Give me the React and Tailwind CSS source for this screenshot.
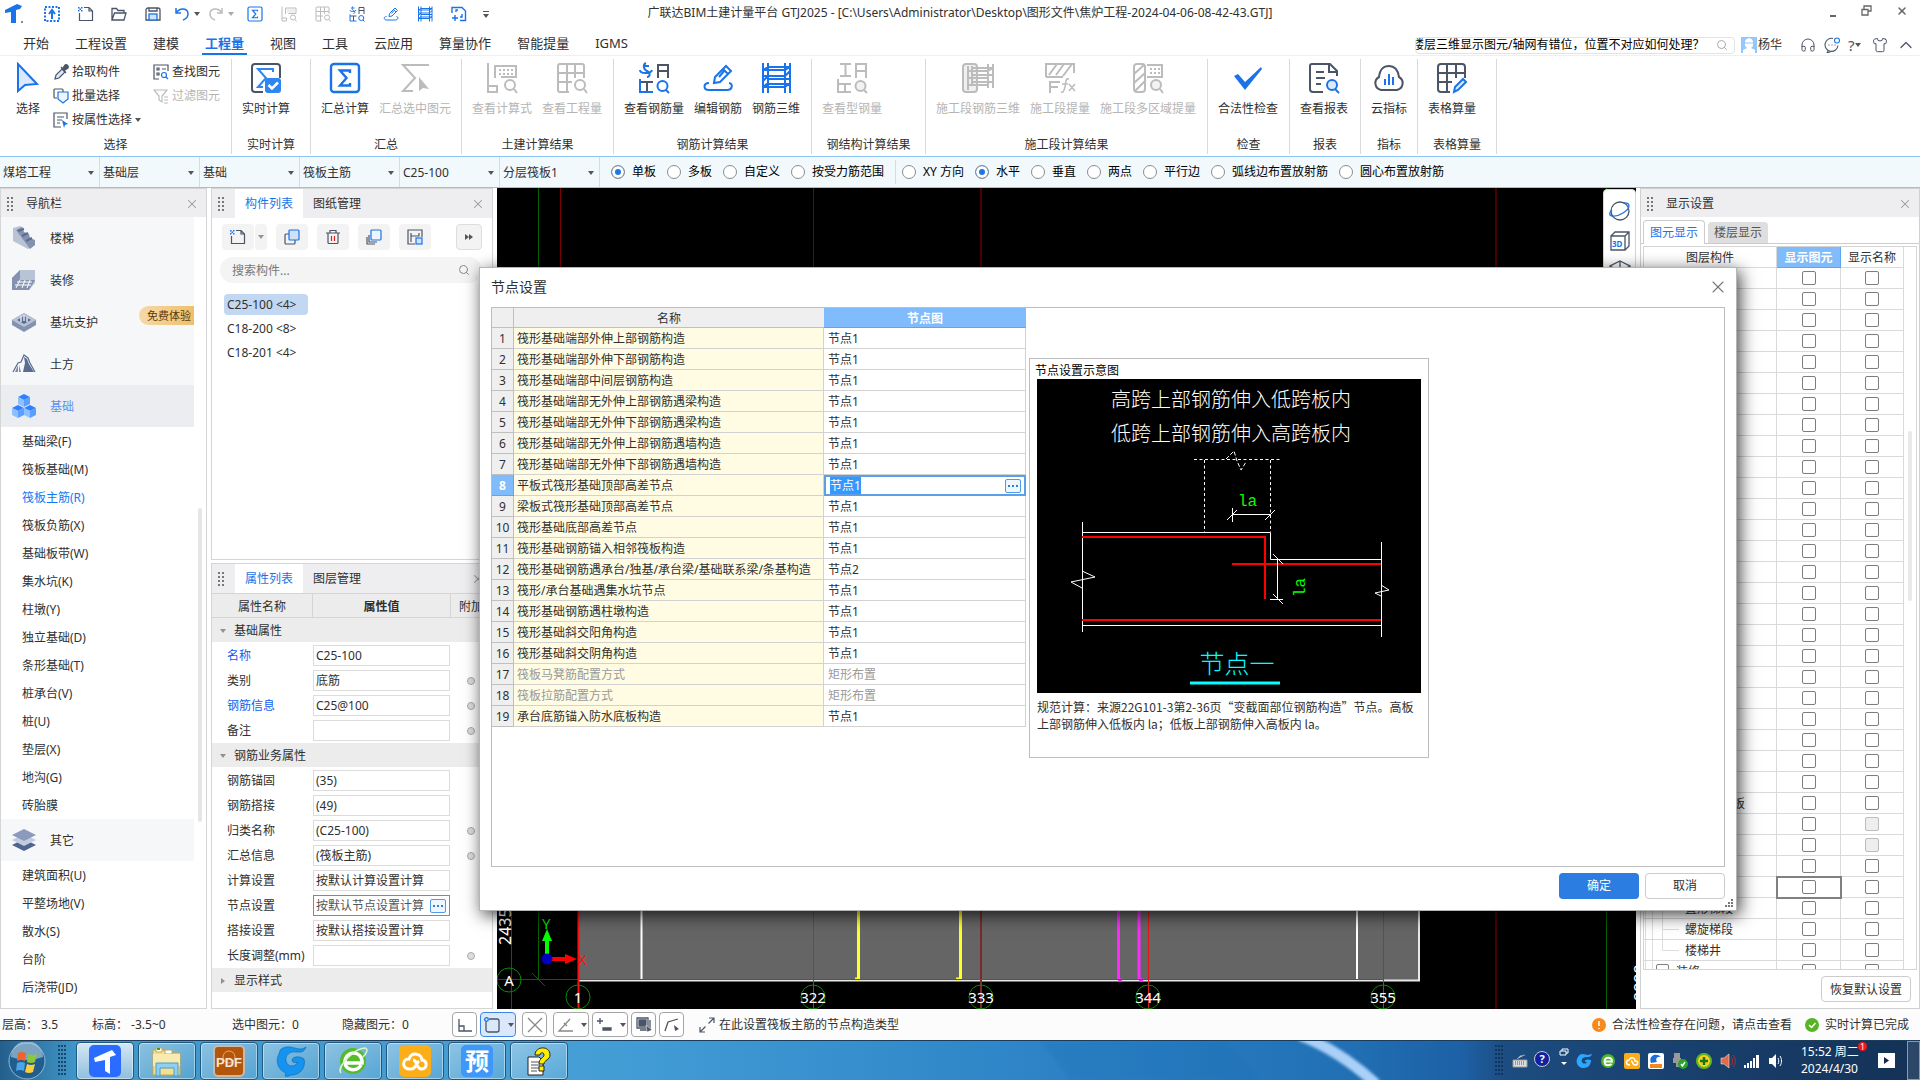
import { useEffect, useRef } from 'react';
import { X, Search, Headphones, Shirt, ChevronUp } from 'lucide-react';

const BLUE = '#1a73e8';
const DARK = '#4b5567';
const GRAY = '#bcbcbc';

const Svg = ({ size = 'size-8', box = 32, children, stroke = DARK, width = 2 }) => (
  <svg viewBox={`0 0 ${box} ${box}`} className={`${size} shrink-0`} fill="none" stroke={stroke} strokeWidth={width} aria-hidden="true">
    {children}
  </svg>
);

const Caret = ({ className = '' }) => (
  <svg viewBox="0 0 6 4" className={`w-[6px] h-[4px] shrink-0 fill-[#555] ${className}`} aria-hidden="true">
    <path d="M0 0h6L3 4z" />
  </svg>
);

/* ---------- ribbon icons ---------- */

const SumIcon = ({ size }) => (
  <Svg size={size} stroke={BLUE} width={2.4}>
    <rect x="2" y="2" width="28" height="28" rx="3" />
    <path d="M21 11V8.500H11l6.500 7.500L11 23.500h10V21" />
  </Svg>
);

const RealtimeIcon = ({ size }) => (
  <Svg size={size}>
    <path d="M13 30H5a3 3 0 0 1-3-3V5a3 3 0 0 1 3-3h22a3 3 0 0 1 3 3v11" />
    <path d="M23 10V7H8l8 9-8 9h5" stroke="#2f86f0" />
    <rect x="15" y="16" width="16" height="15" rx="3" fill="#2f86f0" stroke="none" />
    <path d="m18.500 23 3.500 3.500 6-6" stroke="#fff" strokeWidth="2.500" />
  </Svg>
);

const SumPickIcon = ({ size }) => (
  <Svg size={size} stroke={GRAY}>
    <path d="M30 3H4l12 13L4 29h10" />
    <path d="M20 15v14l4-3 6 1z" fill={GRAY} stroke="none" />
  </Svg>
);

const FormulaIcon = ({ size }) => (
  <Svg size={size} stroke={GRAY}>
    <path d="M2 1v29h9v-6H2M9 16V4h21v11H15" />
    <path d="M13 8h2m2 0h2m2 0h2m2 0h2M13 12h2m2 0h2m2 0h2m2 0h2" />
    <circle cx="24" cy="23" r="5" /><path d="m28 27 3 4" />
  </Svg>
);

const GridSearchIcon = ({ size }) => (
  <Svg size={size} stroke={GRAY}>
    <path d="M13 30H4a2 2 0 0 1-2-2V4a2 2 0 0 1 2-2h22a2 2 0 0 1 2 2v12M2 11h26M2 20h14M11 2v28M19 2v14" />
    <circle cx="24" cy="23" r="5" /><path d="m28 27 3 4" />
  </Svg>
);

const RebarQtyIcon = ({ size }) => (
  <Svg size={size}>
    <path d="M8 1c-3 1-3 6 1 8s3 6 0 6M2 8c0 4 11 4 12 0M5 4h6" stroke={BLUE} />
    <path d="M20 16V3h10v13M20 9h10M2 20h13M9 20v10" />
    <path d="M2 17v13h13" stroke={BLUE} />
    <circle cx="24.500" cy="24" r="5" stroke={BLUE} /><path d="m28 28 3 3" stroke={BLUE} />
  </Svg>
);

const SteelQtyIcon = ({ size }) => (
  <Svg size={size} stroke={GRAY}>
    <path d="M4 2h11M4 14h11M9.500 2v12M20 16V2h10v14M20 9h10M2 17v13h13M2 22h13M9 22v8" />
    <circle cx="24.500" cy="24" r="5" fill="#f2f2f2" /><path d="m28 28 3 3" />
  </Svg>
);

const EditRebarIcon = ({ size }) => (
  <Svg size={size} stroke={BLUE}>
    <path d="m12 21 1-6L24 4l5 5-11 11zM21 7l5 5M17 15l5-6" />
    <path d="M7 21c-6 0-6 7 0 7h18c6 0 6-7 2-7" />
  </Svg>
);

const Rebar3dIcon = ({ size, stroke = BLUE }) => (
  <Svg size={size} stroke={stroke}>
    <path d="M3 1v30M8 1v30M25 1v30M30 1v30M3 8h22l5-3M8 5h22M3 14h22M8 17h22M3 25h22M8 22h22M3 8l5-3M3 19l5-5M25 14l5-5M3 25l5-4M25 25l5-4" />
  </Svg>
);

const SectionRebarIcon = () => (
  <Svg stroke={GRAY}>
    <rect x="1" y="2" width="14" height="28" rx="3" fill="#f0f0f0" />
    <path d="M6 4v24M10 4v20M26 2v24M31 2v24M6 9h20l5-3M10 6h21M6 16h20M10 13h21M6 23h20M10 20h21" />
  </Svg>
);

const SectionFxIcon = () => (
  <Svg stroke={GRAY}>
    <path d="M2 15V2h28v9M2 15h17M5 13 13 2M12 13l8-11M19 14l9-12M6 19v12M6 20h10M6 25h8" />
    <path d="M25 17c-4-1-3 4-4 8s-2 6-4 5M18 22h6M25 22l6 7M31 22l-6 7" strokeWidth="1.500" />
  </Svg>
);

const SectionZoneIcon = () => (
  <Svg stroke={GRAY}>
    <rect x="2" y="2" width="11" height="28" rx="3" />
    <path d="m2 12 10-9M2 21l11-10M3 29l10-10M15 3h15v12H15" />
    <path d="M18 7h2m2 0h2m2 0h2M18 11h2m2 0h2m2 0h2" />
    <circle cx="24" cy="23" r="5" fill="#f2f2f2" /><path d="m28 27 3 4" />
  </Svg>
);

const CheckIcon = () => (
  <Svg>
    <path d="m2 14 4-2 7 8L29 5l1 2-17 21z" fill={BLUE} stroke="none" />
  </Svg>
);

const ReportIcon = () => (
  <Svg>
    <path d="M15 30H5a3 3 0 0 1-3-3V4a2 2 0 0 1 2-2h18l7 7v5M21 2v8h8M8 10h8M8 16h9M8 22h5" />
    <circle cx="24" cy="23" r="5" fill="#dbeafe" stroke={BLUE} /><path d="m27 27 4 4" stroke={BLUE} />
  </Svg>
);

const CloudIcon = () => (
  <Svg>
    <path d="M8 28a7 7 0 0 1-2-13C7 7 10 4 16 4s9 4 10 11a7 7 0 0 1-2 13z" />
    <path d="M12 17v6M16 12v11M20 15v8" stroke={BLUE} />
  </Svg>
);

const TableCalcIcon = () => (
  <Svg>
    <path d="M14 30H5a3 3 0 0 1-3-3V5a3 3 0 0 1 3-3h21a3 3 0 0 1 3 3v11M2 11h27M2 20h14M11 2v28M20 2v14" />
    <path d="m18 30 1-5 8-8 3 3-8 8z" stroke={BLUE} fill="#dbeafe" />
  </Svg>
);

const NewDocIcon = ({ size = 'size-4' }) => (
  <Svg size={size} box={16} width={1.2}>
    <path d="M6 1.500h5l3.500 3.500v9.500h-13V7M11 1.500V5h3.500" />
    <path d="M0 1h1.500v1.500H0zM3 1h1.500v1.500H3zM1.500 2.500H3V4H1.500zM0 4h1.500v1.500H0zM3 4h1.500v1.500H3z" fill={BLUE} stroke="none" />
  </Svg>
);

/* ---------- top bars ---------- */

const QuickButton = ({ label, className, children }) => (
  <button type="button" aria-label={label} className={`flex items-center justify-center h-6 ${className}`}>
    {children}
  </button>
);

const TitleBar = () => (
  <header className="relative h-7 shrink-0 flex items-center">
    <div className="flex items-center">
      <QuickButton label="主菜单" className="w-[35px] pr-2">
        <svg viewBox="0 0 20 20" className="size-5" aria-hidden="true">
          <path d="M1 6 13 0l5 2-2 3-4 1v13H7V8L1 9z" fill={BLUE} />
          <path d="M17 17h2v2h-2z" fill="#888" />
        </svg>
      </QuickButton>
      <QuickButton label="上传" className="w-[34px]">
        <Svg size="size-4" box={16} stroke={BLUE}>
          <rect x="1" y="1" width="14" height="14" strokeDasharray="2 1.500" />
          <path d="M8 13V6M5 8l3-4 3 4" />
        </Svg>
      </QuickButton>
      <QuickButton label="新建" className="w-[33px]"><NewDocIcon /></QuickButton>
      <QuickButton label="打开" className="w-[34px]">
        <Svg size="size-4" box={16} width={1.3}>
          <path d="M1 14V2.500h4.500l1.500 2h6V7M1 14l2.500-7H15l-2 7z" />
        </Svg>
      </QuickButton>
      <QuickButton label="保存" className="w-[34px]">
        <Svg size="size-4" box={16} width={1.3}>
          <path d="M1 4a2 2 0 0 1 2-2h10a2 2 0 0 1 2 2v10H1zM4 2v3h8V2" />
          <rect x="4" y="8" width="8" height="6" fill="#cfe3fb" stroke={BLUE} />
        </Svg>
      </QuickButton>
      <QuickButton label="撤销" className="w-[34px] gap-1">
        <Svg size="size-4" box={16} stroke={BLUE} width={1.5}><path d="M2 2v5h5M2 7c4-6 12-5 12 1 0 3-2 5-5 6" /></Svg>
        <Caret />
      </QuickButton>
      <QuickButton label="恢复" className="w-[34px] gap-1">
        <Svg size="size-4" box={16} stroke={GRAY} width={1.5}><path d="M14 2v5H9M14 7C10 1 2 2 2 8c0 3 2 5 5 6" /></Svg>
        <Caret className="opacity-50" />
      </QuickButton>
      <QuickButton label="汇总计算" className="w-[34px]"><SumIcon size="size-4" /></QuickButton>
      <QuickButton label="查看计算式" className="w-[34px]"><FormulaIcon size="size-4" /></QuickButton>
      <QuickButton label="查看工程量" className="w-[34px]"><GridSearchIcon size="size-4" /></QuickButton>
      <QuickButton label="查看钢筋量" className="w-[34px]"><RebarQtyIcon size="size-4" /></QuickButton>
      <QuickButton label="编辑钢筋" className="w-[34px]"><EditRebarIcon size="size-4" /></QuickButton>
      <QuickButton label="钢筋三维" className="w-[34px]"><Rebar3dIcon size="size-4" /></QuickButton>
      <QuickButton label="新增" className="w-[34px]">
        <Svg size="size-4" box={16} stroke={BLUE} width={1.4}>
          <path d="M1 7V1.500h10l3.500 3.500v9.500H9M4 9v6M1 12h6M5 6V4h2M11 8v3H9" />
        </Svg>
      </QuickButton>
      <QuickButton label="更多" className="w-5 flex-col gap-[2px]">
        <span className="w-[6px] h-px bg-[#555]" />
        <Caret />
      </QuickButton>
    </div>
    <h1 className="absolute inset-x-0 top-[5px] text-center leading-4 pointer-events-none">
      广联达BIM土建计量平台 GTJ2025 - [C:\Users\Administrator\Desktop\图形文件\焦炉工程-2024-04-06-08-42-43.GTJ]
    </h1>
    <div className="ml-auto self-start flex items-center gap-6 pr-3 h-[21px]">
      <button type="button" aria-label="最小化" className="w-3 h-3 flex items-end justify-end"><span className="w-[6px] h-[2px] bg-[#666]" /></button>
      <button type="button" aria-label="还原">
        <Svg size="size-3" box={12} stroke="#666" width={1.3}><path d="M4 4V1h7v5H8M2 4.500h6V10H2z" /></Svg>
      </button>
      <button type="button" aria-label="关闭"><X className="size-3 text-[#666]" strokeWidth={3} /></button>
    </div>
  </header>
);

const menus = ['开始', '工程设置', '建模', '工程量', '视图', '工具', '云应用', '算量协作', '智能提量', 'IGMS'];

const MenuBar = () => {
  const searchRef = useRef(null);

  // the hint is longer than the box, keep its end in view
  useEffect(() => {
    searchRef.current.scrollLeft = searchRef.current.scrollWidth;
  }, []);

  return (
    <nav className="h-7 shrink-0 flex items-end border-b border-[#efefef] pl-5">
      <div className="flex gap-5 text-[13px]">
        {menus.map((m) => (
          <button
            key={m}
            type="button"
            className={`h-6 px-[3px] pt-px leading-5 border-b-2 ${m === '工程量' ? 'text-[#1a73e8] border-[#1a73e8] font-bold' : 'border-transparent'}`}
          >
            {m}
          </button>
        ))}
      </div>
      <div className="ml-auto flex items-center h-5 pr-1">
        <div className="flex items-center w-[320px] h-[17px] border border-[#e3e3e3] rounded-sm">
          <input
            ref={searchRef}
            aria-label="搜索"
            defaultValue="楼层三维显示图元/轴网有错位，位置不对应如何处理？"
            className="w-[288px] h-4 text-black outline-none"
          />
          <Search className="size-3 ml-3 text-[#aaa]" />
        </div>
        <button type="button" className="flex items-center ml-[6px] gap-px">
          <svg viewBox="0 0 16 16" className="size-4 bg-[#94c7fb]" aria-hidden="true">
            <path d="M4 5c0-5 8-5 8 0v4l-2 2 4 2v3H2v-3l4-2-2-2z" fill="#fff" />
            <path d="M4 6h8" stroke="#94c7fb" />
          </svg>
          杨华
        </button>
        <div className="flex items-center gap-2 ml-[18px] text-[#4b5567]">
          <button type="button" aria-label="客服"><Headphones className="size-4" strokeWidth={1.5} /></button>
          <button type="button" aria-label="消息">
            <Svg size="size-4" box={16} width={1.1}>
              <path d="M9 1.500a6.500 6.500 0 1 0 5 7M4 14l-1 2 4-1.500M4.500 8h1M7.500 8h1M10.500 8h1" />
              <circle cx="13" cy="3.500" r="2.500" stroke={BLUE} />
            </Svg>
          </button>
          <button type="button" aria-label="帮助" className="flex items-center text-[15px] leading-4 w-4">?<Caret /></button>
          <button type="button" aria-label="皮肤"><Shirt className="size-4" strokeWidth={1.5} /></button>
          <button type="button" aria-label="收起"><ChevronUp className="size-5" strokeWidth={1.5} /></button>
        </div>
      </div>
    </nav>
  );
};

const groups = [
  { label: '实时计算', width: 'w-[79px]', items: [['实时计算', RealtimeIcon]] },
  { label: '汇总', width: 'w-[151px]', items: [['汇总计算', SumIcon], ['汇总选中图元', SumPickIcon, true]] },
  { label: '土建计算结果', width: 'w-[152px]', items: [['查看计算式', FormulaIcon, true], ['查看工程量', GridSearchIcon, true]] },
  { label: '钢筋计算结果', width: 'w-[198px]', items: [['查看钢筋量', RebarQtyIcon], ['编辑钢筋', EditRebarIcon], ['钢筋三维', Rebar3dIcon]] },
  { label: '钢结构计算结果', width: 'w-[114px]', items: [['查看型钢量', SteelQtyIcon, true]] },
  { label: '施工段计算结果', width: 'w-[282px]', items: [['施工段钢筋三维', SectionRebarIcon, true], ['施工段提量', SectionFxIcon, true], ['施工段多区域提量', SectionZoneIcon, true]] },
  { label: '检查', width: 'w-[82px]', items: [['合法性检查', CheckIcon]] },
  { label: '报表', width: 'w-[71px]', items: [['查看报表', ReportIcon]] },
  { label: '指标', width: 'w-[57px]', items: [['云指标', CloudIcon]] },
  { label: '表格算量', width: 'w-[79px]', items: [['表格算量', TableCalcIcon]] },
];

const BigButton = ({ label, icon: Icon, disabled }) => (
  <button type="button" disabled={disabled} className={`flex flex-col items-center gap-[6px] whitespace-nowrap leading-[18px] ${disabled ? 'text-[#b5b5b5]' : ''}`}>
    <Icon />
    {label}
  </button>
);

const PointerIcon = () => (
  <Svg><path d="M6 2v27l7-6 12-1z" fill="#dbe9fb" stroke={BLUE} /></Svg>
);

const Ribbon = () => (
  <section className="h-[100px] shrink-0 flex pt-[3px] pb-[2px]">
    <div className="w-[232px] shrink-0 border-r border-[#d9d9d9] flex flex-col justify-between">
      <div className="flex pl-3 pt-[3px]">
        <BigButton label="选择" icon={PointerIcon} />
        <div className="ml-[9px] pt-px flex flex-col gap-[6px] leading-[18px]">
          <button type="button" className="flex items-center gap-[3px]">
            <Svg size="size-4" box={16} width={1.2}>
              <path d="m2 15 1-4 6-6 3 3-6 6z" fill="#dbe9fb" />
              <path d="m8 3 5 6M10 4l2-3c2-1 4 1 3 3l-3 2z" fill={DARK} />
            </Svg>
            拾取构件
          </button>
          <button type="button" className="flex items-center gap-[3px]">
            <Svg size="size-4" box={16} width={1.2}>
              <path d="M4 10H2a1 1 0 0 1-1-1V2a1 1 0 0 1 1-1h7a1 1 0 0 1 1 1v2" />
              <path d="M5 4h10v7l-5 4-5-4z" stroke={BLUE} fill="#eef5ff" />
            </Svg>
            批量选择
          </button>
          <button type="button" className="flex items-center gap-[3px]">
            <Svg size="size-4" box={16} width={1.2}>
              <path d="M8 15H1V1h13v6M4 5h7M4 8h5M4 11h3" />
              <path d="m9 8 6 4-3 1-1 3z" fill={BLUE} stroke="none" />
            </Svg>
            按属性选择<Caret />
          </button>
        </div>
        <div className="ml-3 pt-px flex flex-col gap-[6px] leading-[18px]">
          <button type="button" className="flex items-center gap-[3px]">
            <Svg size="size-4" box={16} width={1.2}>
              <path d="M6 15H1V1h14v6M4 4h2v2H4zM4 9h2v2H4zM9 5h4" />
              <circle cx="11" cy="11" r="2.500" stroke={BLUE} /><path d="m13 13 2 2" stroke={BLUE} />
            </Svg>
            查找图元
          </button>
          <button type="button" disabled className="flex items-center gap-[3px] text-[#b5b5b5]">
            <Svg size="size-4" box={16} stroke={GRAY} width={1.2}>
              <path d="M1 2h13L9 8v6l-3-2V8zM11 9h4M11 12h4M11 15h4" />
            </Svg>
            过滤图元
          </button>
        </div>
      </div>
      <div className="text-center leading-[18px]">选择</div>
    </div>
    {groups.map((g) => (
      <div key={g.label} className={`${g.width} shrink-0 border-r border-[#d9d9d9] flex flex-col justify-between`}>
        <div className="flex gap-[10px] pl-[10px] pt-[3px]">
          {g.items.map(([label, icon, disabled]) => (
            <BigButton key={label} label={label} icon={icon} disabled={disabled} />
          ))}
        </div>
        <div className="text-center leading-[18px]">{g.label}</div>
      </div>
    ))}
  </section>
);

const Radio = ({ name, label, checked }) => (
  <label className="flex items-center gap-[7px] text-black">
    <input
      type="radio"
      name={name}
      defaultChecked={checked}
      className="appearance-none size-[14px] rounded-full border border-[#8c8c8c] bg-white checked:bg-[#1f78e0] checked:shadow-[inset_0_0_0_3px_white]"
    />
    {label}
  </label>
);

const OptionsBar = () => (
  <section className="h-8 shrink-0 flex items-stretch bg-[#f1f9fd] border-y border-[#8fc3f5]">
    {['煤塔工程', '基础层', '基础', '筏板主筋', 'C25-100', '分层筏板1'].map((v) => (
      <div key={v} className="relative w-[100px] border-r border-[#d5dde2]">
        <select aria-label={v} className="appearance-none w-full h-full pl-[3px] pt-px outline-none">
          <option>{v}</option>
        </select>
        <Caret className="absolute right-[5px] top-[14px]" />
      </div>
    ))}
    <div className="flex items-center gap-[11px] pl-[11px] pr-[11px] border-r border-[#d5dde2] my-[3px]">
      <Radio name="slab" label="单板" checked />
      <Radio name="slab" label="多板" />
      <Radio name="slab" label="自定义" />
      <Radio name="slab" label="按受力筋范围" />
    </div>
    <div className="flex items-center gap-[11px] pl-[6px]">
      <Radio name="dir" label="XY 方向" />
      <Radio name="dir" label="水平" checked />
      <Radio name="dir" label="垂直" />
      <Radio name="dir" label="两点" />
      <Radio name="dir" label="平行边" />
      <Radio name="dir" label="弧线边布置放射筋" />
      <Radio name="dir" label="圆心布置放射筋" />
    </div>
  </section>
);

/* ---------- side panels ---------- */

const Grip = () => (
  <svg viewBox="0 0 6 14" className="w-[6px] h-[14px] shrink-0 fill-[#777]" aria-hidden="true">
    {[0, 4, 8, 12].map((y) => (
      <path key={y} d={`M0 ${y}h2v2H0zM4 ${y}h2v2H4z`} />
    ))}
  </svg>
);

const CloseButton = () => (
  <button type="button" aria-label="关闭" className="ml-auto mr-[7px]">
    <X className="size-[14px] text-[#999]" strokeWidth={1.8} />
  </button>
);

const navIcons = {
  楼梯: (
    <>
      <path d="m1 2 7-2 4 2-4 3v5l15 9-7 4L1 15z" fill="#b9c3d6" />
      <path d="m4 4 6-3 2 5 5 2 1 4 5 2v5l-5 4z" fill="#8492b0" />
      <path d="m6 5 6-2M10 10l6-3M14 15l6-3" stroke="#5b6c91" strokeWidth="2" />
    </>
  ),
  装修: (
    <>
      <path d="M8 2h15v13l-6 7H0V10z" fill="#b9c3d6" />
      <path d="M8 2v9L0 20V10zM0 20l7-8h16l-6 10H0z" fill="#8492b0" />
      <path d="M5 14h15M3 17h16M8 12l-4 8M13 12l-3 8M18 12l-3 8" stroke="#fff" />
    </>
  ),
  基坑支护: (
    <>
      <path d="m0 10 12-7 12 7v5l-12 7-12-7z" fill="#8492b0" />
      <path d="m0 10 12-7 12 7-12 7z" fill="#b9c3d6" />
      <path d="m5 10 7-4 7 4-7 4z" fill="#5b6c91" />
      <path d="M9 6v6M12 5v6M15 7v5" stroke="#dde3ee" strokeWidth="1.500" />
    </>
  ),
  土方: (
    <>
      <path d="M1 20 6 11l3-1 3-7 4 3 2 5 5 9" fill="none" stroke="#5b6c91" strokeWidth="1.200" />
      <path d="m12 5 1 6-2 9h11l-5-8-2-5z" fill="#5b6c91" />
      <path d="m6 13-3 7h3zM7 13l2 7H7z" fill="#7c8cae" />
    </>
  ),
  基础: (
    <>
      {[[6, 0], [0, 11], [12, 11]].map(([x, y]) => (
        <g key={x} transform={`translate(${x} ${y})`}>
          <path d="m0 3 6-3 6 3-6 3z" fill="#2f80ff" />
          <path d="m0 3 6 3v7l-6-3z" fill="#8ebfff" />
          <path d="m12 3-6 3v7l6-3z" fill="#5b9fff" />
        </g>
      ))}
    </>
  ),
  其它: (
    <>
      <path d="m0 17 12-6 12 6-12 6z" fill="#4e6590" />
      <path d="m0 12 12-6 12 6-12 6z" fill="#c3ccdd" />
      <path d="m0 7 12-6 12 6-12 6z" fill="#8a9bbe" />
    </>
  ),
};

const NavItem = ({ label, active, badge }) => (
  <li className={`relative h-[42px] shrink-0 ${active ? 'bg-[#ecedf1] text-[#5b8ff0]' : 'bg-[#f6f7f9]'}`}>
    <button type="button" className="flex items-center gap-[14px] w-full h-full pl-[11px]">
      <svg viewBox="0 0 24 24" className="size-6" aria-hidden="true">{navIcons[label]}</svg>
      <span className="pt-[2px]">{label}</span>
    </button>
    {badge && (
      <span className="absolute right-0 top-[5px] h-[19px] pl-2 pr-[3px] leading-[19px] rounded-l-full bg-linear-to-r from-[#f6d9a8] to-[#efbf6a] text-[#5a3a0c] text-[11px]">
        {badge}
      </span>
    )}
  </li>
);

const NavSub = ({ label }) => (
  <li className="h-7 shrink-0">
    <button type="button" className={`w-full h-full pl-[21px] pt-[2px] text-left ${label === '筏板主筋(R)' ? 'text-[#0f7bf5]' : ''}`}>{label}</button>
  </li>
);

const baseSubs = ['基础梁(F)', '筏板基础(M)', '筏板主筋(R)', '筏板负筋(X)', '基础板带(W)', '集水坑(K)', '柱墩(Y)', '独立基础(D)', '条形基础(T)', '桩承台(V)', '桩(U)', '垫层(X)', '地沟(G)', '砖胎膜'];
const otherSubs = ['建筑面积(U)', '平整场地(V)', '散水(S)', '台阶', '后浇带(JD)'];

const NavPanel = () => (
  <aside className="w-[207px] shrink-0 flex flex-col border border-[#d5d5d5]">
    <div className="h-7 shrink-0 flex items-center bg-[#eeeef0] pl-[6px] pt-[2px] gap-[13px]">
      <Grip />
      导航栏
      <CloseButton />
    </div>
    <div className="flex-1 min-h-0 flex">
      <ul className="w-[193px] flex flex-col overflow-hidden">
        <NavItem label="楼梯" />
        <NavItem label="装修" />
        <NavItem label="基坑支护" badge="免费体验" />
        <NavItem label="土方" />
        <NavItem label="基础" active />
        {baseSubs.map((s) => <NavSub key={s} label={s} />)}
        <NavItem label="其它" />
        {otherSubs.map((s) => <NavSub key={s} label={s} />)}
      </ul>
      <div className="w-1 h-[314px] mt-[291px] ml-1 rounded-full bg-[#e6e6e6]" />
    </div>
  </aside>
);

const PanelTabs = ({ first, second }) => (
  <div className="h-[29px] shrink-0 flex items-center bg-[#eeeef0] pl-[6px]">
    <Grip />
    <button type="button" className="ml-[11px] h-full px-[10px] bg-white text-[#1a73e8]">{first}</button>
    <button type="button" className="px-[10px]">{second}</button>
    <CloseButton />
  </div>
);

const ToolButton = ({ label, className = 'w-8', children }) => (
  <button type="button" aria-label={label} className={`h-[26px] rounded bg-[#f3f3f4] flex items-center justify-center ${className}`}>
    {children}
  </button>
);

const ComponentPanel = () => (
  <section className="h-[372px] shrink-0 flex flex-col border border-[#d5d5d5]">
    <PanelTabs first="构件列表" second="图纸管理" />
    <div className="flex items-center pl-[10px] pr-[10px] pt-[6px] gap-[9px]">
      <div className="flex gap-px">
        <ToolButton label="新建"><NewDocIcon /></ToolButton>
        <ToolButton label="更多" className="w-3"><Caret className="opacity-60" /></ToolButton>
      </div>
      <ToolButton label="复制">
        <Svg size="size-4" box={16} width={1.2}>
          <rect x="1" y="5" width="10" height="10" rx="1" />
          <rect x="5" y="1" width="10" height="10" rx="1" fill="#cfe0f7" stroke={BLUE} />
        </Svg>
      </ToolButton>
      <ToolButton label="删除">
        <Svg size="size-4" box={16} width={1.2}>
          <path d="M1 4h14M5 4V1.500h6V4M3 4v9.500a1 1 0 0 0 1 1h8a1 1 0 0 0 1-1V4" />
          <path d="M6.500 7v5M9.500 7v5" stroke="#e02020" />
        </Svg>
      </ToolButton>
      <ToolButton label="层间复制">
        <Svg size="size-4" box={16} width={1.2}>
          <path d="M3 6v7h8M1 8v7h8" />
          <rect x="5" y="1" width="10" height="10" rx="1" fill="#eef5ff" stroke={BLUE} />
        </Svg>
      </ToolButton>
      <ToolButton label="存档">
        <Svg size="size-4" box={16} width={1.2}>
          <path d="M8 15H1V1h14v7M4 4v9M4 7h8V4" />
          <rect x="9" y="9" width="6" height="6" stroke={BLUE} fill="#cfe0f7" />
        </Svg>
      </ToolButton>
      <ToolButton label="展开" className="w-[26px] ml-auto border border-[#ddd]">
        <svg viewBox="0 0 8 6" className="w-2 h-[6px] fill-[#555]" aria-hidden="true"><path d="M0 0l4 3-4 3zM4 0l4 3-4 3z" /></svg>
      </ToolButton>
    </div>
    <label className="flex items-center h-[26px] mt-[7px] ml-2 mr-[10px] pl-3 pr-3 rounded-full bg-[#f4f4f4]">
      <input aria-label="搜索构件" placeholder="搜索构件..." className="flex-1 pt-[2px] outline-none placeholder:text-[#777]" />
      <Search className="size-3 text-[#888]" />
    </label>
    <ul className="mt-[9px] ml-3 flex flex-col items-start">
      {['C25-100 <4>', 'C18-200 <8>', 'C18-201 <4>'].map((c, i) => (
        <li key={c} className="h-6 flex items-center">
          <button type="button" className={`h-[21px] w-[84px] text-left pl-[3px] pt-[2px] rounded-sm ${i === 0 ? 'bg-[#c2d8f2]' : ''}`}>{c}</button>
        </li>
      ))}
    </ul>
  </section>
);

const baseProps = [
  { name: '名称', value: 'C25-100', key: true },
  { name: '类别', value: '底筋', dot: true },
  { name: '钢筋信息', value: 'C25@100', key: true, dot: true },
  { name: '备注', value: '', dot: true },
];

const rebarProps = [
  { name: '钢筋锚固', value: '(35)' },
  { name: '钢筋搭接', value: '(49)' },
  { name: '归类名称', value: '(C25-100)', dot: true },
  { name: '汇总信息', value: '(筏板主筋)', dot: true },
  { name: '计算设置', value: '按默认计算设置计算' },
  { name: '节点设置', value: '按默认节点设置计算', editing: true },
  { name: '搭接设置', value: '按默认搭接设置计算' },
  { name: '长度调整(mm)', value: '', dot: true },
];

const Dots = ({ className = '' }) => (
  <button type="button" aria-label="更多" className={`w-4 h-[14px] rounded-[2px] border border-[#4f9bea] bg-[#eef6ff] flex items-center justify-center gap-[2px] ${className}`}>
    <span className="size-[2px] bg-[#2f7fd8]" />
    <span className="size-[2px] bg-[#2f7fd8]" />
    <span className="size-[2px] bg-[#2f7fd8]" />
  </button>
);

const PropRow = ({ prop }) => (
  <label className="h-[25px] shrink-0 flex items-center">
    <span className={`w-[101px] shrink-0 pl-[15px] whitespace-nowrap ${prop.key ? 'text-[#0f5df5]' : ''}`}>{prop.name}</span>
    <span className={`w-[137px] h-[21px] shrink-0 flex items-center border pl-[2px] ${prop.editing ? 'border-[#5b8fd6]' : 'border-[#dcdcdc]'}`}>
      <input defaultValue={prop.value} className={`min-w-0 flex-1 outline-none ${prop.editing ? 'text-[#555]' : ''}`} />
      {prop.editing && <Dots className="mr-[3px]" />}
    </span>
    {prop.dot && <span className="size-2 ml-[17px] rounded-full border border-[#aaa] bg-[#ddd]" />}
  </label>
);

const PropGroup = ({ label, closed }) => (
  <button type="button" className="h-6 shrink-0 flex items-center gap-2 pl-2 pt-[2px] bg-[#ececec]">
    <Caret className={closed ? '-rotate-90 opacity-60' : 'opacity-60'} />
    {label}
  </button>
);

const PropertyPanel = () => (
  <section className="flex-1 min-h-0 flex flex-col border border-[#d5d5d5] overflow-hidden">
    <PanelTabs first="属性列表" second="图层管理" />
    <div className="h-[25px] shrink-0 flex items-stretch bg-[#ececec] border-y border-[#d5d5d5] text-center whitespace-nowrap leading-[22px]">
      <span className="w-[101px] pt-[2px] border-r border-[#d5d5d5]">属性名称</span>
      <span className="w-[138px] pt-[2px] shrink-0 border-r border-[#d5d5d5] font-bold">属性值</span>
      <span className="pl-2 pt-[2px]">附加</span>
    </div>
    <PropGroup label="基础属性" />
    <div className="flex flex-col pt-px">
      {baseProps.map((p) => <PropRow key={p.name} prop={p} />)}
    </div>
    <PropGroup label="钢筋业务属性" />
    <div className="flex flex-col pt-px">
      {rebarProps.map((p) => <PropRow key={p.name} prop={p} />)}
    </div>
    <PropGroup label="显示样式" closed />
  </section>
);

/* ---------- drawing area ---------- */

const axes = [
  { x: 578, y: 997, t: '1' },
  { x: 813, y: 997, t: '322' },
  { x: 981, y: 997, t: '333' },
  { x: 1148, y: 997, t: '344' },
  { x: 1383, y: 997, t: '355' },
  { x: 509, y: 980, t: 'A' },
];

const Canvas = () => (
  <main className="relative flex-1 min-w-0 bg-black overflow-hidden">
    <svg className="block w-full h-full" aria-label="绘图区">
      <g transform="translate(-497 -188)" fontFamily="Noto Sans" fontSize="15" fill="#fff">
        <path d="M538.500 188v791M511.500 640v370M497 979.500h81M532 973l13 13M1606.500 188v822" stroke="#006400" fill="none" />
        <path d="M560.500 188v560M813.500 188v560" stroke="#7a0000" />
        <path d="M981 188v822M1496 188v822" stroke="#4a0000" strokeWidth="2" />
        <rect x="579" y="740" width="841" height="240" fill="#656565" />
        <path d="M641.500 740v239M1357 740v239" stroke="#fff" strokeWidth="2" />
        <path d="M1419 740v240M579 980.500h841" stroke="#e8e8e8" strokeWidth="2" fill="none" />
        <path d="M858.500 740v239M960.500 740v239M855 979h4M956 979h4" stroke="#ffff2a" strokeWidth="3" />
        <path d="M1118.500 740v240M1139 740v240M1118 980h4M1139 980h4" stroke="#ff2aff" strokeWidth="3" />
        <path d="M981 740v270" stroke="#7a2a2a" strokeWidth="2" />
        <path d="M578.500 740v270" stroke="#ff1010" strokeWidth="2" />
        <path d="M579 979.500h805M813.500 740v270M1148.500 740v270M1383.500 740v270" stroke="#e01818" />
        {axes.map((a) => (
          <g key={a.t}>
            <circle cx={a.x} cy={a.y} r="12" fill="none" stroke="#0a8a0a" />
            <text x={a.x} y={a.y + 6} textAnchor="middle">{a.t}</text>
          </g>
        ))}
        <text transform="translate(511 945) rotate(-90)" fontSize="16">2435</text>
        <text transform="translate(1646 1001) rotate(-90)" fontSize="16">8888</text>
        <path d="M547 957v-23" stroke="#00ff00" strokeWidth="4" />
        <path d="m542 941 5-12 5 12z" fill="#00ff00" />
        <path d="M547 959h20" stroke="#ff0000" strokeWidth="4" />
        <path d="m565 954 12 5-12 5z" fill="#ff0000" />
        <circle cx="547" cy="959" r="5.500" fill="#0000c0" />
        <text x="542" y="929" fill="#00e000">Y</text>
        <text x="578" y="965" fill="#ff1010">X</text>
      </g>
    </svg>
    <div className="absolute right-0 top-px w-[33px] h-[560px] bg-white border border-[#d5d5d5] rounded-t flex flex-col items-center pt-[10px] gap-2">
      <button type="button" aria-label="动态观察">
        <Svg size="size-[22px]" box={22} width={1.3}>
          <circle cx="11" cy="11" r="9" />
          <path d="M3 10C-4 17 6 18 14 13S22 2 14 3" stroke={BLUE} />
        </Svg>
      </button>
      <button type="button" aria-label="三维">
        <Svg size="size-[22px]" box={22} width={1.3}>
          <path d="M2 6h14v14H2zM2 6l4-4h14v14l-4 4M16 6l4-4" />
          <text x="3" y="17" fontSize="8" fontWeight="bold" fill={BLUE} stroke="none">3D</text>
        </Svg>
      </button>
      <button type="button" aria-label="视图">
        <Svg size="size-[22px]" box={22} width={1.3}>
          <path d="m11 1 10 5v10l-10 5-10-5V6zM11 1v10L1 6M11 11l10-5M11 11v10" />
          <path d="m1 7 6 3-6 4z" fill={BLUE} stroke="none" />
        </Svg>
      </button>
    </div>
  </main>
);

/* ---------- display settings ---------- */

const layerNames = { 25: '预制叠合板', 30: '直形梯段', 31: '螺旋梯段', 32: '楼梯井' };
const layerRows = Array.from({ length: 34 }, (_, i) => ({ id: i, name: layerNames[i] || '', off: i === 26 || i === 27, current: i === 29 }));

const Tick = (props) => (
  <input
    type="checkbox"
    className="appearance-none block mx-auto size-[14px] rounded-[2px] border border-[#7d7d7d] bg-white disabled:bg-[#eee] disabled:border-[#bbb]"
    {...props}
  />
);

const DisplayPanel = () => (
  <aside className="w-[280px] shrink-0 flex flex-col border border-[#d0d0d0]">
    <div className="h-7 shrink-0 flex items-center bg-[#eeeef0] pl-[6px] pt-[2px] gap-[13px]">
      <Grip />
      显示设置
      <CloseButton />
    </div>
    <div className="h-[27px] shrink-0 flex items-end gap-[3px] pl-[2px] border-b border-[#ccc]">
      <button type="button" className="h-[24px] w-[62px] -mb-px rounded-t border border-b-0 border-[#ccc] bg-white text-[#1a73e8]">图元显示</button>
      <button type="button" className="h-[21px] w-[60px] rounded-t bg-[#dedede] text-[#555]">楼层显示</button>
    </div>
    <div className="flex-1 min-h-0 mx-[2px] mt-[2px] border border-[#d5d5d5] overflow-hidden flex">
      <table className="w-[260px] h-fit table-fixed border-separate border-spacing-0 leading-[18px]">
        <colgroup>
          <col />
          <col className="w-[64px]" />
          <col className="w-[63px]" />
        </colgroup>
        <thead>
          <tr className="h-[21px]">
            <th className="p-0 pt-[2px] font-normal border-b border-r border-[#d9d9d9]">图层构件</th>
            <th className="p-0 pt-[2px] bg-[#80bbfb] text-white border-b border-r border-[#5ca5f0]">显示图元</th>
            <th className="p-0 pt-[2px] font-normal border-b border-r border-[#d9d9d9]">显示名称</th>
          </tr>
        </thead>
        <tbody>
          {layerRows.map((r) => (
            <tr key={r.id} className="h-[21px]">
              <td className="p-0 border-b border-r border-[#d9d9d9]">
                <div className="flex items-center h-5">
                  <svg viewBox="0 0 41 20" className={`${r.id === 33 ? 'w-8' : 'w-[41px]'} h-5 shrink-0`} preserveAspectRatio="xMinYMin slice" stroke="#ddd" fill="none" aria-hidden="true">
                    <path d="M1.500 0v20M8.500 0v20" />
                    {r.id < 32 && <path d="M18.500 0v20M18.500 10.500H35" />}
                    {r.id === 32 && <path d="M18.500 0v10.500H35" />}
                    {r.id === 33 && <rect x="12.500" y="3.500" width="12" height="13" rx="1.500" stroke="#7d7d7d" />}
                  </svg>
                  <span className="pt-[2px]">{r.id === 33 ? '装修' : r.name}</span>
                </div>
              </td>
              <td className={`p-0 border-b border-r border-[#d9d9d9] ${r.current ? 'outline-2 -outline-offset-1 outline-[#808080]' : ''}`}>
                <Tick aria-label={`显示图元 ${r.id + 1}`} />
              </td>
              <td className="p-0 border-b border-r border-[#d9d9d9]">
                <Tick aria-label={`显示名称 ${r.id + 1}`} disabled={r.off} />
              </td>
            </tr>
          ))}
        </tbody>
      </table>
      <div className="w-1 h-[170px] mt-[184px] ml-1 rounded-full bg-[#e9e9e9]" />
    </div>
    <div className="h-[38px] shrink-0 flex items-center justify-end pr-[8px]">
      <button type="button" className="w-[90px] h-[26px] pt-px rounded border border-[#ccc] bg-white">恢复默认设置</button>
    </div>
  </aside>
);

/* ---------- node settings dialog ---------- */

const nodeRows = [
  ['筏形基础端部外伸上部钢筋构造', '节点1'],
  ['筏形基础端部外伸下部钢筋构造', '节点1'],
  ['筏形基础端部中间层钢筋构造', '节点1'],
  ['筏形基础端部无外伸上部钢筋遇梁构造', '节点1'],
  ['筏形基础端部无外伸下部钢筋遇梁构造', '节点1'],
  ['筏形基础端部无外伸上部钢筋遇墙构造', '节点1'],
  ['筏形基础端部无外伸下部钢筋遇墙构造', '节点1'],
  ['平板式筏形基础顶部高差节点', '节点1'],
  ['梁板式筏形基础顶部高差节点', '节点1'],
  ['筏形基础底部高差节点', '节点1'],
  ['筏形基础钢筋锚入相邻筏板构造', '节点1'],
  ['筏形基础钢筋遇承台/独基/承台梁/基础联系梁/条基构造', '节点2'],
  ['筏形/承台基础遇集水坑节点', '节点1'],
  ['筏形基础钢筋遇柱墩构造', '节点1'],
  ['筏形基础斜交阳角构造', '节点1'],
  ['筏形基础斜交阴角构造', '节点1'],
  ['筏板马凳筋配置方式', '矩形布置', true],
  ['筏板拉筋配置方式', '矩形布置', true],
  ['承台底筋锚入防水底板构造', '节点1'],
];

const NodeDiagram = () => (
  <svg viewBox="0 0 384 314" className="block w-[384px] h-[314px] bg-black" fill="none" stroke="#fff" aria-label="节点一">
    <g fill="#fff" stroke="none" fontSize="20" fontFamily="Noto Sans CJK SC" fontWeight="300" textAnchor="middle">
      <text x="194" y="28">高跨上部钢筋伸入低跨板内</text>
      <text x="194" y="62">低跨上部钢筋伸入高跨板内</text>
      <text x="200" y="294" fontSize="25" fill="#00ffff">节点一</text>
    </g>
    <path d="M157 80.500h86M167.500 81v72M233.500 81v72" strokeDasharray="3 2.500" />
    <path d="m189 80 8-8 3 10 4 9 5-8" strokeDasharray="4 2" />
    <path d="M45.500 143v110M45 153.500h188.500v27H344.500M344.500 163v95M45 246.500h299" />
    <path d="M45 158h183v62M195 185h149M45 241h299" stroke="#ff0000" strokeWidth="2" />
    <path d="M195.500 129v14M195 135.500h38M190 141l10-10M228 141l10-10" />
    <path d="M240.500 180v41M233 220.500h13M236 175l10 10M236 215l10 10" />
    <path d="m45 192 13 6-24 5 11 6M344 206l8 5-14 3 6 3" />
    <path d="M153 304h90" stroke="#00ffff" strokeWidth="3" />
    <g fill="#00ff00" stroke="none" fontFamily="Liberation Mono" fontSize="16">
      <text x="201" y="127">la</text>
      <text transform="translate(268 218) rotate(-90)">la</text>
    </g>
  </svg>
);

const NodeDialog = () => (
  <div
    role="dialog"
    aria-label="节点设置"
    className="absolute left-[479px] right-[183px] top-[267px] bottom-[169px] bg-white border border-[#b5b5b5] flex flex-col px-[11px] shadow-[3px_4px_16px_rgba(0,0,0,0.75)]"
  >
    <div className="h-[39px] shrink-0 flex items-center text-sm pb-[2px]">
      节点设置
      <button type="button" aria-label="关闭" className="ml-auto -mr-[3px]">
        <X className="size-5" color="#777" strokeWidth={1.3} />
      </button>
    </div>
    <div className="flex-1 min-h-0 flex items-start border border-[#bdbdbd]">
      <table className="w-[534px] table-fixed border-separate border-spacing-0 leading-[18px] shrink-0">
        <colgroup>
          <col className="w-[22px]" />
          <col />
          <col className="w-[202px]" />
        </colgroup>
        <thead>
          <tr className="h-5 leading-[17px]">
            <th className="p-0 bg-[#efefef] border-r border-b border-[#bfbfbf]" aria-label="序号" />
            <th className="p-0 pt-[2px] font-normal bg-[#efefef] border-b border-[#bfbfbf]">名称</th>
            <th className="p-0 pt-[2px] bg-[#80bbfb] text-white border-b border-[#5ca5f0]">节点图</th>
          </tr>
        </thead>
        <tbody>
          {nodeRows.map(([name, value, muted], i) => {
            const current = i === 7;
            return (
              <tr key={name} className="h-[21px]">
                <td className={`p-0 pt-[2px] text-center border-r border-b ${current ? 'bg-[#80bbfb] border-[#5ca5f0] text-white font-bold' : 'bg-[#efefef] border-[#bfbfbf]'}`}>{i + 1}</td>
                <td className={`p-0 pt-[2px] pl-[3px] whitespace-nowrap bg-[#fffce3] border-r border-b border-[#d2d2d2] ${muted ? 'text-[#999]' : ''}`}>{name}</td>
                {current ? (
                  <td className="p-0 outline-2 -outline-offset-2 outline-[#5b9fe6]">
                    <div className="flex items-center h-5 pl-[6px] pr-[5px]">
                      <input aria-label={name} defaultValue={value} className="w-[31px] h-[17px] bg-[#3399ff] text-white outline-none" />
                      <Dots className="ml-auto" />
                    </div>
                  </td>
                ) : (
                  <td className={`p-0 pt-[2px] pl-1 border-r border-b border-[#d2d2d2] ${muted ? 'text-[#999]' : ''}`}>{value}</td>
                )}
              </tr>
            );
          })}
        </tbody>
      </table>
      <figure className="w-[400px] h-[400px] mt-[50px] ml-[3px] border border-[#bdbdbd] pl-[7px] pr-2 pt-[3px] shrink-0">
        <figcaption className="h-[17px] leading-[17px] text-black -ml-[2px]">节点设置示意图</figcaption>
        <NodeDiagram />
        <p className="mt-[5px] leading-[17px] font-['Noto_Sans_CJK_SC',sans-serif]">
          规范计算：来源22G101-3第2-36页“变截面部位钢筋构造”节点。高板上部钢筋伸入低板内 la；低板上部钢筋伸入高板内 la。
        </p>
      </figure>
    </div>
    <div className="h-[43px] shrink-0 flex items-start justify-end gap-[6px] pt-[6px]">
      <button type="button" className="w-20 h-[26px] rounded bg-[#2b7de1] text-white">确定</button>
      <button type="button" className="w-20 h-[26px] rounded border border-[#ccc] bg-white">取消</button>
    </div>
    <svg viewBox="0 0 8 8" className="absolute right-[3px] bottom-[3px] size-2 fill-[#777]" aria-hidden="true">
      <path d="M6 0h2v2H6zM3 3h2v2H3zM6 3h2v2H6zM0 6h2v2H0zM3 6h2v2H3zM6 6h2v2H6z" />
    </svg>
  </div>
);

/* ---------- status bar ---------- */

const StatusButton = ({ label, wide, active, children }) => (
  <button
    type="button"
    aria-label={label}
    className={`h-[25px] flex items-center justify-center gap-2 rounded border ${wide ? 'w-9' : 'w-[25px]'} ${active ? 'bg-[#dbe8fc] border-[#3b86e8]' : 'bg-white border-[#a5a5a5]'}`}
  >
    <Svg size="size-4" box={16} width={1.3}>{children}</Svg>
    {wide && <Caret className="-mr-[2px]" />}
  </button>
);

const StatusBar = () => (
  <footer className="h-[31px] shrink-0 flex items-center bg-[#fcfcfc] whitespace-nowrap">
    <span className="w-[90px] pl-[2px]">层高： 3.5</span>
    <span className="w-[142px] pl-[2px]">标高： -3.5~0</span>
    <span className="w-[110px]">选中图元：0</span>
    <span className="w-[110px]">隐藏图元：0</span>
    <div className="flex gap-[3px]">
      <StatusButton label="正交"><path d="M2 2v12h13M2 9h5v5" /></StatusButton>
      <StatusButton label="捕捉" wide active>
        <path d="M5 2h8a2 2 0 0 1 2 2v9a2 2 0 0 1-2 2H4a2 2 0 0 1-2-2V5" /><circle cx="2.500" cy="2.500" r="1.800" stroke={BLUE} />
      </StatusButton>
      <span className="w-0" />
      <StatusButton label="交点"><path d="m1 1 14 14M15 1 1 15" stroke="#888" /></StatusButton>
      <span className="w-0" />
      <StatusButton label="角度" wide><path d="M13 2 2 14h14M7 6l3 3" stroke="#888" /></StatusButton>
      <StatusButton label="偏移" wide><path d="M4 1v6M1 4h6" /><path d="M7 11h8v2H7z" fill={DARK} /></StatusButton>
      <StatusButton label="图层"><path d="M1 1h11v10H1z" /><path d="M3 3h7v6H3z" fill={DARK} /><path d="M14 3v10H4" /><path d="m10 8 6 5-5 2z" fill={DARK} stroke="#fff" strokeWidth="0.500" /></StatusButton>
      <StatusButton label="折线"><path d="M1 14 4 5l10-3" /><path d="m10 8 5 4-4 2z" fill={DARK} stroke="none" /></StatusButton>
    </div>
    <span className="ml-[15px] flex items-center gap-1">
      <Svg size="size-4" box={16} width={1.2}><path d="M10 1h5v5M15 1 9.500 6.500M6 15H1v-5M1 15l5.500-5.500" /></Svg>
      在此设置筏板主筋的节点构造类型
    </span>
    <span className="ml-auto flex items-center gap-[6px]">
      <svg viewBox="0 0 14 14" className="size-[14px]" aria-hidden="true"><circle cx="7" cy="7" r="7" fill="#f78a1d" /><path d="M7 3v5M7 10v1" stroke="#fff" strokeWidth="1.500" /></svg>
      合法性检查存在问题，请点击查看
    </span>
    <span className="ml-[13px] mr-[11px] flex items-center gap-[6px]">
      <svg viewBox="0 0 14 14" className="size-[14px]" aria-hidden="true"><circle cx="7" cy="7" r="7" fill="#58b327" /><path d="m4 7 2.500 2.500L10.500 5" stroke="#fff" strokeWidth="1.500" fill="none" /></svg>
      实时计算已完成
    </span>
  </footer>
);

/* ---------- system taskbar ---------- */

const apps = [
  ['广联达', <><rect width="32" height="32" rx="5" fill="#2a6cff" /><path d="m5 13 18-8 4 5-6 2v17l-5-3V15l-10 2z" fill="#fff" /></>],
  ['资源管理器', <><path d="M2 5h11l2 3h14v22H2z" fill="#f5df92" stroke="#c9a84c" /><path d="M5 3h6v4H5zM14 5h7v4h-7z" fill="#fff" stroke="#c9a84c" /><path d="M6 3h3v2H6z" fill="#2aa52a" /><path d="M2 9h27v12H2z" fill="#f9eab0" /><path d="M5 18h22v13h-4v-8H9v8H5z" fill="#8fd0f0" stroke="#4a9cc8" /></>],
  ['PDF', <><rect x="1" y="1" width="30" height="30" rx="4" fill="#b3560b" stroke="#c9b9a8" strokeWidth="2" /><circle cx="16" cy="12" r="6" fill="none" stroke="#e9a76a" /><text x="16" y="22" fontSize="13" fontWeight="bold" textAnchor="middle" fill="#f5e6d8" fontFamily="Liberation Sans">PDF</text></>],
  ['浏览器G', <><path d="M31 2c-2 6-6 5-10 5-7-1-11 4-10 9 1 6 9 7 12 1-2 1-6 1-6-2 1-4 8-4 12-1 2 8-3 16-13 16-2 1-4 2-6 1l1-3C3 25 0 16 4 9c1-3 1-5 4-6 7-3 12 1 17 1 3 0 4-1 6-2z" fill="#1593ee" stroke="#0b6fc0" strokeWidth="0.700" /></>],
  ['浏览器e', <><circle cx="16" cy="16" r="13" fill="#55bb2a" /><path d="M9 18h16c1-13-17-13-17-1 0 9 12 10 16 3" fill="none" stroke="#fff" strokeWidth="3.500" /><path d="M4 28C-1 22 18 3 28 3c4 1 1 6-2 9" fill="none" stroke="#d8f5c8" strokeWidth="1.500" /></>],
  ['云盘', <><rect width="32" height="32" rx="5" fill="#fbae17" /><path d="M12 24c-10 1-9-11-2-10 3-8 13-5 13 1 6 1 5 9 0 9-7 0-4-9-9-9M12 24c5 0 5-6 8-8" fill="none" stroke="#fff" strokeWidth="3" /></>],
  ['预算', <><rect width="32" height="32" rx="5" fill="#3e97fb" /><text x="16" y="25" fontSize="24" fontWeight="bold" textAnchor="middle" fill="#fff" fontFamily="Noto Sans CJK SC">预</text></>],
  ['帮助', <><path d="M5 12h11l4 4v14H5z" fill="#fff" stroke="#222" /><path d="M8 17h8M8 20h9M8 23h9M8 26h6" stroke="#555" /><path d="M12 10c0-9 15-10 15 0 0 5-6 5-6 9h-5c0-6 5-6 5-9 0-3-4-3-4 0zM16 21h5v5h-5z" fill="#ffee00" stroke="#222" /></>],
];

const TrayGrip = () => (
  <svg viewBox="0 0 8 32" className="w-2 h-8 shrink-0" aria-hidden="true">
    {[0, 4, 8, 12, 16, 20, 24, 28].map((y) => (
      <path key={y} d={`M0 ${y}h2v2H0zM3 ${y}h2v2H3zM6 ${y}h2v2H6z`} fill="#0e2a4a" opacity="0.700" />
    ))}
  </svg>
);

const trayIcons = [
  ['G', <path d="M16 1c-1 3-3 3-5 3-4 0-6 2-5 5 1 2 4 2 5 0-4 0-2-4 4-2 0 5-3 8-7 8-7 0-9-7-6-11 3-5 7-2 10-2z" fill="#2aa8ff" />],
  ['e', <><circle cx="8" cy="8" r="7" fill="#4fb52b" /><path d="M4 8.500h8c0-5-7.500-5-7.500 0s5 4 7 2.500" stroke="#fff" strokeWidth="1.800" fill="none" /></>],
  ['云盘', <><rect width="16" height="16" rx="2" fill="#fbae17" /><path d="M6 12c-5 0-4-5-1-5 2-4 6-2 6 1 4 0 3 4 0 4-3 0-2-4-4-4" fill="none" stroke="#fff" strokeWidth="1.500" /></>],
  ['防火墙', <><rect width="16" height="16" rx="2" fill="#fff" /><path d="M3 10C0 3 8-1 13 4c-4-1-6 2-4 5z" fill="#1b6fd8" /><path d="M2 11h12v4H2z" fill="#f08a1d" /></>],
  ['USB', <><path d="M2 0h6v5h1v5H1V5h1zM4 10h3v4H4z" fill="#999" /><circle cx="11" cy="11" r="5" fill="#28a428" /><path d="m9 11 1.500 2L13 9" stroke="#fff" fill="none" strokeWidth="1.500" /></>],
  ['安全', <><circle cx="8" cy="8" r="7.500" fill="#f5d31c" /><circle cx="8" cy="8" r="7" stroke="#5ab52b" fill="none" strokeWidth="2" /><path d="M8 4v8M4 8h8" stroke="#187818" strokeWidth="2.500" /></>],
  ['声音', <><path d="M1 5h3l5-4v14l-5-4H1z" fill="#e06a4a" stroke="#fff" strokeWidth="0.500" /><path d="M11 4c2 2 2 6 0 8M13 2c3 3 3 9 0 12" stroke="#a33" fill="none" /></>],
  ['网络', <path d="M0 12h2v3H0zM3 10h2v5H3zM6 8h2v7H6zM9 5h2v10H9zM12 2h3v13h-3z" fill="#fff" />],
  ['音量', <><path d="M1 5h3l4-4v14l-4-4H1z" fill="#fff" /><path d="M10 5c1 2 1 4 0 6M12 3c2 3 2 7 0 10" stroke="#fff" fill="none" /></>],
];

const Taskbar = () => (
  <footer className="relative h-10 shrink-0 flex items-center overflow-hidden border-t border-[#1c3c5c] text-white">
    <svg viewBox="0 0 1920 40" preserveAspectRatio="none" className="absolute inset-0 w-full h-full" aria-hidden="true">
      <defs>
        <linearGradient id="sky">
          <stop offset="0" stopColor="#245f8c" />
          <stop offset="0.040" stopColor="#3f97c9" />
          <stop offset="0.300" stopColor="#459fd6" />
          <stop offset="0.520" stopColor="#2f86c8" />
          <stop offset="0.700" stopColor="#2170b5" />
          <stop offset="0.762" stopColor="#1d60a5" />
          <stop offset="0.785" stopColor="#1c4c80" />
          <stop offset="1" stopColor="#143156" />
        </linearGradient>
        <filter id="soft"><feGaussianBlur stdDeviation="1.500" /></filter>
      </defs>
      <rect width="1920" height="40" fill="url(#sky)" />
      <path d="M1300-6q40 16 76 50" stroke="#a9d0f8" strokeWidth="11" fill="none" filter="url(#soft)" />
      <path d="M1040 0l30 40h190L1225 0z" fill="#1f6fb8" opacity="0.250" filter="url(#soft)" />
    </svg>
    <button type="button" aria-label="开始" className="relative w-[54px] flex justify-center">
      <svg viewBox="0 0 38 38" className="size-[38px]" aria-hidden="true">
        <circle cx="19" cy="19" r="18" fill="#1f5e8f" stroke="#8fb8d4" />
        <path d="M3 15a16 16 0 0 1 32 0q-16 6-32 0z" fill="#b9d3e4" opacity="0.600" />
        <path d="M10 11q4-2 8 0l-1 8q-4-2-8 0z" fill="#f0642c" />
        <path d="M20 12q4 2 9 0l-2 8q-4 2-8 0z" fill="#8cc63e" />
        <path d="M9 21q4-2 8 0l-1 8q-4-2-8 0z" fill="#4aa5e8" />
        <path d="M19 22q4 2 8 0l-2 8q-4 2-8 0z" fill="#fbcf3a" />
      </svg>
    </button>
    <div className="relative flex items-center gap-[10px] pl-1">
      <TrayGrip />
      <div className="flex gap-1">
        {apps.map(([label, art], i) => (
          <button
            key={label}
            type="button"
            aria-label={label}
            className={`w-[58px] h-[38px] rounded-sm border border-[#1f5880] flex items-center justify-center shadow-[inset_0_0_0_1px_rgba(255,255,255,0.45)] ${i === 0 ? 'bg-linear-to-b from-[#d5e7f3] to-[#8fbfdf]' : 'bg-linear-to-br from-white/40 to-white/10'}`}
          >
            <svg viewBox="0 0 32 32" className="size-8" aria-hidden="true">{art}</svg>
          </button>
        ))}
      </div>
    </div>
    <div className="relative ml-auto flex items-center h-full">
      <TrayGrip />
      <svg viewBox="0 0 16 16" className="size-4 ml-[9px]" aria-hidden="true"><path d="M1 7h14v7H1zM5 6l3-3 5-1" fill="#ddd" stroke="#999" /><path d="M3 9h10M3 11h10" stroke="#555" strokeDasharray="1 1" /></svg>
      <svg viewBox="0 0 16 16" className="size-4 ml-[6px] mb-1" aria-hidden="true"><circle cx="8" cy="8" r="7.500" fill="#1020a0" stroke="#ccc" /><text x="8" y="12" fontSize="11" fontWeight="bold" textAnchor="middle" fill="#fff">?</text></svg>
      <svg viewBox="0 0 10 18" className="w-[10px] h-[18px] ml-[9px] mb-2" fill="none" stroke="#fff" aria-hidden="true"><path d="M3 3V1h6v4H7M1 3h6v4H1z" /><path d="M2 14h6l-3 3z" fill="#fff" stroke="none" /></svg>
      <div className="flex gap-2 ml-[7px]">
        {trayIcons.map(([label, art]) => (
          <button key={label} type="button" aria-label={label}><svg viewBox="0 0 16 16" className="size-4" aria-hidden="true">{art}</svg></button>
        ))}
      </div>
      <div className="relative ml-[17px] w-[62px] leading-[17px] pb-[2px] whitespace-nowrap">
        <div>15:52 周二</div>
        <div>2024/4/30</div>
        <span className="absolute -right-1 -top-px size-[9px] rounded-full bg-[#f01818] text-[8px] leading-[9px] text-center">1</span>
      </div>
      <svg viewBox="0 0 17 15" className="w-[17px] h-[15px] ml-[15px]" aria-hidden="true"><path d="M0 0h17v15H0z" fill="#fff" /><path d="M6 4l5 3.500L6 11z" fill="#14284a" /></svg>
      <button type="button" aria-label="显示桌面" className="w-[13px] h-full ml-3 border border-[#7f9cba] bg-white/10" />
    </div>
  </footer>
);

export default function App() {
  return (
    <div className="relative h-screen flex flex-col bg-white text-xs text-[#303030] overflow-hidden font-['Noto_Sans','Noto_Sans_CJK_SC',sans-serif]">
      <TitleBar />
      <MenuBar />
      <Ribbon />
      <OptionsBar />
      <div className="flex-1 min-h-0 flex gap-1">
        <NavPanel />
        <div className="w-[282px] shrink-0 flex flex-col gap-[3px]">
          <ComponentPanel />
          <PropertyPanel />
        </div>
        <Canvas />
        <DisplayPanel />
      </div>
      <StatusBar />
      <Taskbar />
      <NodeDialog />
    </div>
  );
}
